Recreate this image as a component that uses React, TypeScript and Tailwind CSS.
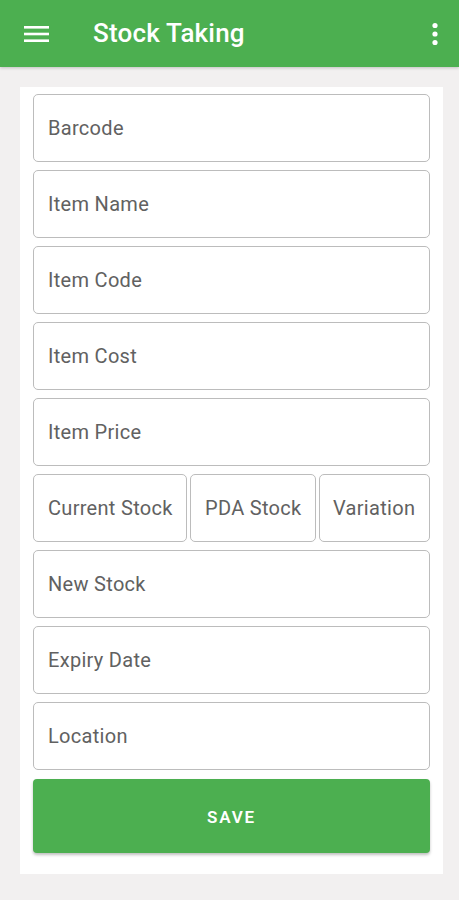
export default function App() {
  const fields = ["Barcode", "Item Name", "Item Code", "Item Cost", "Item Price"];
  const after = ["New Stock", "Expiry Date", "Location"];

  const box =
    "h-[68px] flex items-center rounded-[5px] border-[1.5px] border-[#bcbcbc] bg-white text-[20px] tracking-[0.3px] text-[#616161]";

  return (
    <div className="w-[459px] h-[900px] bg-[#f2f0f0] font-['Roboto',sans-serif]">
      {/* App bar */}
      <div className="h-[67px] bg-[#4caf50] flex items-center shadow-[0_1px_3px_rgba(0,0,0,0.2)]">
        <div className="w-[93px] pl-[24px]">
          <svg width="25" height="18" viewBox="0 0 25 18">
            <rect x="0" y="1" width="25" height="2.6" fill="#fff" />
            <rect x="0" y="7.7" width="25" height="2.6" fill="#fff" />
            <rect x="0" y="14.4" width="25" height="2.6" fill="#fff" />
          </svg>
        </div>
        <h1 className="flex-1 text-white text-[26px] font-medium tracking-[0.2px]">Stock Taking</h1>
        <div className="pr-[20px]">
          <svg width="8" height="24" viewBox="0 0 8 24">
            <circle cx="4" cy="3.5" r="2.6" fill="#fff" />
            <circle cx="4" cy="12" r="2.6" fill="#fff" />
            <circle cx="4" cy="20.5" r="2.6" fill="#fff" />
          </svg>
        </div>
      </div>

      {/* Form card */}
      <div className="mx-[20px] mt-[20px] w-[423px] bg-white px-[13px] pt-[7px] pb-[21px] flex flex-col gap-[8px]">
        {fields.map((f) => (
          <div key={f} className={`${box} pl-[14px]`}>
            {f}
          </div>
        ))}

        <div className="flex gap-[3px]">
          <div className={`${box} w-[154px] pl-[14px]`}>Current Stock</div>
          <div className={`${box} w-[126px] pl-[14px]`}>PDA Stock</div>
          <div className={`${box} flex-1 pl-[13px]`}>Variation</div>
        </div>

        {after.map((f) => (
          <div key={f} className={`${box} pl-[14px]`}>
            {f}
          </div>
        ))}

        <button className="mt-[1px] h-[74px] rounded-[4px] bg-[#4caf50] text-white text-[17px] font-semibold tracking-[1.8px] pt-[3px] shadow-[0_2px_3px_rgba(0,0,0,0.25)]">
          SAVE
        </button>
      </div>
    </div>
  );
}
